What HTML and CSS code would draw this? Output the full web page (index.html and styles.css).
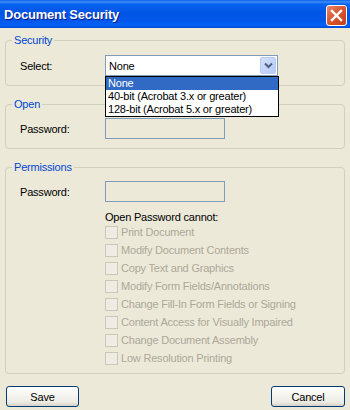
FILE: index.html
```html
<!DOCTYPE html>
<html lang="en">

<head>
  <meta charset="UTF-8">
  <title>Document Security</title>
  <link rel="stylesheet" href="styles.css">
</head>

<body>
<div class="window">
  <div class="titlebar">
    <span class="title">Document Security</span>
    <span class="close">
      <svg width="13" height="13" viewBox="0 0 13 13">
        <path d="M2 2 L11 11 M11 2 L2 11" stroke="#fff" stroke-width="2.4" stroke-linecap="square"/>
      </svg>
    </span>
  </div>

  <div class="dialog">
    <fieldset class="group group-security">
      <legend>Security</legend>
      <div class="group-body">
        <div class="row">
          <label class="label">Select:</label>
          <div class="combo">
            <span class="combo-value">None</span>
            <span class="combo-btn">
              <svg width="9" height="7" viewBox="0 0 9 7">
                <path d="M1 1.5 L4.5 5 L8 1.5" fill="none" stroke="#4D6185" stroke-width="2"/>
              </svg>
            </span>
            <ul class="combo-list">
              <li class="selected">None</li>
              <li>40-bit (Acrobat 3.x or greater)</li>
              <li>128-bit (Acrobat 5.x or greater)</li>
            </ul>
          </div>
        </div>
      </div>
    </fieldset>

    <fieldset class="group">
      <legend>Open</legend>
      <div class="group-body">
        <div class="row">
          <label class="label">Password:</label>
          <span class="input"></span>
        </div>
      </div>
    </fieldset>

    <fieldset class="group group-perms">
      <legend>Permissions</legend>
      <div class="group-body">
        <div class="row">
          <label class="label">Password:</label>
          <span class="input"></span>
        </div>
        <div class="perms">
          <p class="perms-title">Open Password cannot:</p>
          <div class="check"><span class="box"></span>Print Document</div>
          <div class="check"><span class="box"></span>Modify Document Contents</div>
          <div class="check"><span class="box"></span>Copy Text and Graphics</div>
          <div class="check"><span class="box"></span>Modify Form Fields/Annotations</div>
          <div class="check"><span class="box"></span>Change Fill-In Form Fields or Signing</div>
          <div class="check"><span class="box"></span>Content Access for Visually Impaired</div>
          <div class="check"><span class="box"></span>Change Document Assembly</div>
          <div class="check"><span class="box"></span>Low Resolution Printing</div>
        </div>
      </div>
    </fieldset>

    <div class="buttons">
      <button class="btn btn-save">Save</button>
      <button class="btn btn-cancel">Cancel</button>
    </div>
  </div>
</div>
</body>
</html>
```

FILE: styles.css
```css
html,
body {
  margin: 0;
  padding: 0;
  font-family: 'Liberation Sans', Arial, sans-serif;
  font-size: 11px;
  letter-spacing: -0.2px;
  background-color: #ECE9D8;
}
.window {
  width: 350px;
  height: 410px;
  overflow: hidden;
}
.titlebar {
  height: 28px;
  display: flex;
  align-items: center;
  justify-content: space-between;
  padding: 0 3px 0 4px;
  box-sizing: border-box;
  background: linear-gradient(to bottom, #0A5FE8 0, #3D8EF5 2px, #0A62F0 4px, #0055E5 45%, #0058EA 75%, #0062F5 90%, #0048D6 100%);
}
.title {
  color: #fff;
  font-weight: 700;
  font-size: 13px;
  text-shadow: 1px 1px #0A1A8C;
  margin-top: 1px;
}
.close {
  width: 21px;
  height: 21px;
  box-sizing: border-box;
  border: 1px solid #fff;
  border-radius: 3px;
  display: flex;
  align-items: center;
  justify-content: center;
  background: linear-gradient(to bottom right, #E9866A, #D9532E 50%, #C2401C);
  margin-top: 2px;
}
.dialog {
  padding: 0 5px;
}
.group {
  margin: 12px 0 0;
  padding: 0;
  min-width: 0;
  border: 1px solid #D0D0BF;
  border-radius: 4px;
}
.group-security {
  margin-top: 6px;
}
.group legend {
  margin-left: 6px;
  padding: 0 2px;
  line-height: 13px;
  color: #0046D5;
}
.group-body {
  padding: 7px 0 9px 14px;
}
.group-security .group-body {
  padding-top: 8px;
}
.group-perms .group-body {
  padding-bottom: 6px;
}
.row {
  display: flex;
  align-items: center;
  height: 21px;
}
.label {
  width: 85px;
  color: #000;
}
.combo {
  position: relative;
  width: 173px;
  height: 21px;
  box-sizing: border-box;
  border: 1px solid #7F9DB9;
  background: #fff;
  display: flex;
  align-items: center;
  justify-content: space-between;
}
.combo-value {
  padding-left: 3px;
}
.combo-btn {
  width: 16px;
  height: 17px;
  margin-right: 1px;
  box-sizing: border-box;
  border: 1px solid #B8CBF3;
  border-radius: 2px;
  background: linear-gradient(to bottom right, #D4E0FB, #B6C9F7);
  display: flex;
  align-items: center;
  justify-content: center;
}
.combo-list {
  position: absolute;
  top: 20px;
  left: -1px;
  width: 174px;
  box-sizing: border-box;
  margin: 0;
  padding: 0;
  list-style: none;
  border: 1px solid #000;
  background: #fff;
  z-index: 2;
}
.combo-list li {
  height: 13px;
  line-height: 13px;
  padding-left: 2px;
}
.combo-list .selected {
  background: #316AC5;
  color: #fff;
}
.input {
  width: 120px;
  height: 21px;
  box-sizing: border-box;
  border: 1px solid #7F9DB9;
}
.perms {
  margin-left: 85px;
  padding-top: 9px;
}
.perms-title {
  margin: 0;
  line-height: 12px;
}
.check {
  display: flex;
  align-items: center;
  height: 18px;
  color: #ACA899;
}
.box {
  width: 13px;
  height: 13px;
  box-sizing: border-box;
  border: 1px solid #CAC8BB;
  background: #EFEDE3;
  margin-right: 3px;
}
.buttons {
  display: flex;
  justify-content: space-between;
  padding: 12px 0 0 1px;
}
.btn {
  height: 21px;
  padding: 0;
  font-family: inherit;
  font-size: 11px;
  letter-spacing: inherit;
  color: #000;
  border: 1px solid #003C74;
  border-radius: 3px;
  background: linear-gradient(to bottom, #FFFFFF 0, #F6F5F1 40%, #ECEBE4 80%, #D6D0C5 100%);
}
.btn-save {
  width: 73px;
}
.btn-cancel {
  width: 74px;
}
```
